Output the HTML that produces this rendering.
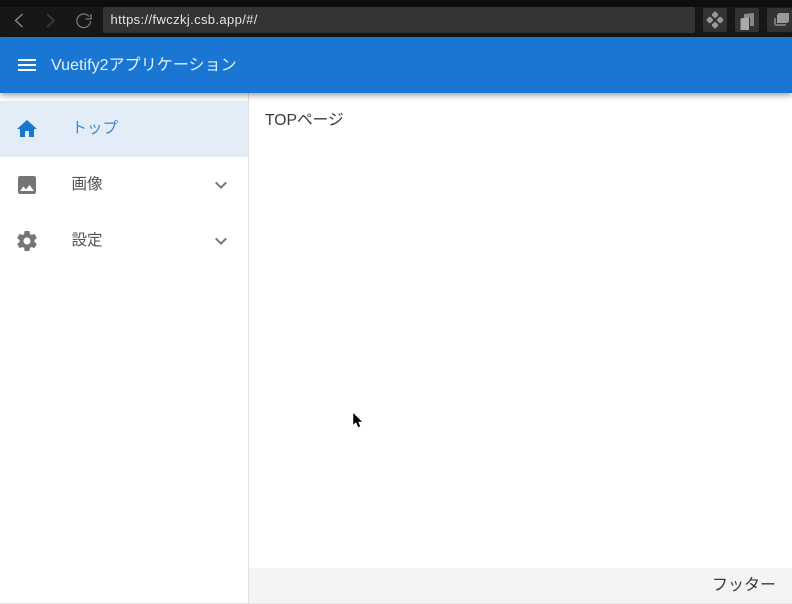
<!DOCTYPE html>
<html lang="ja">
<head>
<meta charset="utf-8">
<style>
html,body{margin:0;padding:0;width:792px;height:604px;overflow:hidden;background:#fff;font-family:"Liberation Sans","Noto Sans CJK JP",sans-serif}
.a{position:absolute;white-space:nowrap}
svg{position:absolute;display:block}
</style>
</head>
<body>
<div class="a" style="left:0;top:0;width:792px;height:37px;background:#171717"></div>
<div class="a" style="left:0;top:0;width:792px;height:7px;background:#0e0e0e"></div>
<svg style="left:0;top:0" width="100" height="37" fill="none" stroke-width="1.300">
<path d="M22.500 14 L15.500 20.500 L22.500 27" stroke="#8c8c8c"/>
<path d="M47 14 L54 20.500 L47 27" stroke="#444"/>
<path d="M89 16.500 A6.800 6.800 0 1 0 90.500 21" stroke="#7a7a7a"/>
<path d="M91 14 V19 H85.500" stroke="#7a7a7a"/>
</svg>
<div class="a" style="left:103px;top:7px;width:592px;height:26px;background:#343434;border-radius:2px"></div>
<div class="a" style="left:110.500px;top:7px;height:26px;line-height:25px;font-size:13px;letter-spacing:.37px;color:#e4e4e4">https://fwczkj.csb.app/#/</div>
<div class="a" style="left:703px;top:8px;width:24px;height:24px;background:#333;border-radius:2px"></div>
<div class="a" style="left:735px;top:8px;width:24px;height:24px;background:#333;border-radius:2px"></div>
<div class="a" style="left:767px;top:8px;width:25px;height:24px;background:#333;border-radius:2px"></div>
<svg style="left:703px;top:8px" width="89" height="24" fill="#999">
<rect x="9.300" y="4.100" width="5.400" height="5.400" rx="1.500" transform="rotate(45 12 6.800)"/>
<rect x="9.300" y="14.500" width="5.400" height="5.400" rx="1.500" transform="rotate(45 12 17.200)"/>
<rect x="4.100" y="9.300" width="5.400" height="5.400" rx="1.500" transform="rotate(45 6.800 12)"/>
<rect x="14.500" y="9.300" width="5.400" height="5.400" rx="1.500" transform="rotate(45 17.200 12)"/>
<path d="M41 6 L51 5 V18 H47 V9 L41 10 Z" fill="#888"/>
<path d="M37.500 10.500 L46 9 V22 H37.500 Z" fill="#aaa"/>
<path d="M74 8 Q74 5 77 5 H86 V12 Q86 15 83 15 H74 Z" fill="#999"/>
<path d="M71 10 H73 V16 H83 V18 H74 Q71 18 71 15 Z" fill="#777"/>
</svg>

<div class="a" style="left:0;top:37px;width:792px;height:56px;background:#1976d2;box-shadow:0 2px 4px -1px rgba(0,0,0,.2),0 4px 5px 0 rgba(0,0,0,.14),0 1px 10px 0 rgba(0,0,0,.12);z-index:5"></div>
<svg style="left:15px;top:53px;z-index:6" width="24" height="24" fill="#fff"><path d="M3 18h18v-2H3v2zm0-5h18v-2H3v2zm0-7v2h18V6H3z"/></svg>
<div class="a" style="left:51px;top:37px;height:56px;line-height:57px;font-size:16px;letter-spacing:.05px;color:#e6f0fa;z-index:6">Vuetify2アプリケーション</div>

<div class="a" style="left:0;top:93px;width:248px;height:510px;background:#fff;border-right:1px solid #e0e0e0"></div>
<div class="a" style="left:0;top:101px;width:248px;height:56px;background:#e3edf8"></div>
<svg style="left:15px;top:117px" width="24" height="24" fill="#1976d2"><path d="M10 20v-6h4v6h5v-8h3L12 3 2 12h3v8z"/></svg>
<div class="a" style="left:71.500px;top:101px;height:56px;line-height:56px;font-size:15.500px;color:#3c86d6">トップ</div>

<svg style="left:15px;top:173px" width="24" height="24" fill="#757575"><path d="M21 19V5c0-1.100-.9-2-2-2H5c-1.100 0-2 .9-2 2v14c0 1.100.9 2 2 2h14c1.100 0 2-.9 2-2zM8.500 13.500l2.500 3.010L14.500 12l4.500 6H5l3.500-4.500z"/></svg>
<div class="a" style="left:71.500px;top:157px;height:56px;line-height:55px;font-size:15.500px;color:#555">画像</div>
<svg style="left:209px;top:173px" width="24" height="24" fill="#7a7a7a"><path d="M7.410 8.590L12 13.170l4.590-4.580L18 10l-6 6-6-6 1.410-1.410z"/></svg>

<svg style="left:15px;top:229px" width="24" height="24" fill="#757575"><path d="M19.430 12.980c.04-.32.07-.64.07-.98s-.03-.66-.07-.98l2.110-1.650c.19-.15.24-.42.12-.64l-2-3.460c-.12-.22-.39-.3-.61-.22l-2.490 1c-.52-.4-1.080-.73-1.690-.98l-.38-2.650C14.460 2.180 14.250 2 14 2h-4c-.25 0-.46.18-.49.420l-.38 2.650c-.61.25-1.170.59-1.690.98l-2.490-1c-.23-.09-.49 0-.61.22l-2 3.460c-.13.220-.07.490.12.640l2.110 1.650c-.04.320-.07.650-.07.980s.03.660.07.980l-2.110 1.650c-.19.150-.24.420-.12.640l2 3.460c.12.220.39.300.61.220l2.490-1c.52.400 1.080.730 1.690.980l.38 2.650c.03.240.24.420.49.420h4c.25 0 .46-.18.49-.42l.38-2.650c.61-.25 1.170-.59 1.690-.98l2.490 1c.23.090.49 0 .61-.22l2-3.460c.12-.22.07-.49-.12-.64l-2.110-1.650zM12 15.500c-1.930 0-3.500-1.570-3.500-3.500s1.570-3.500 3.500-3.500 3.500 1.570 3.500 3.500-1.570 3.500-3.500 3.500z"/></svg>
<div class="a" style="left:71.500px;top:213px;height:56px;line-height:55px;font-size:15.500px;color:#555">設定</div>
<svg style="left:209px;top:229px" width="24" height="24" fill="#7a7a7a"><path d="M7.410 8.590L12 13.170l4.590-4.580L18 10l-6 6-6-6 1.410-1.410z"/></svg>

<div class="a" style="left:265px;top:108.500px;line-height:24px;font-size:15.700px;color:#3a3a3a">TOPページ</div>

<svg style="left:352px;top:412px" width="12" height="18"><path d="M1 0.500 V13 L4 10.500 L6 15.500 L8.500 14.500 L6.500 10 H10.500 Z" fill="#000" stroke="#fff" stroke-width=".5"/></svg>

<div class="a" style="left:249px;top:568px;width:543px;height:35px;background:#f4f4f4"></div>
<div class="a" style="right:16px;top:568px;height:35px;line-height:35px;font-size:16px;color:#3a3a3a">フッター</div>
<div class="a" style="left:0;top:603px;width:792px;height:1px;background:#e4e4e4"></div>
</body>
</html>
